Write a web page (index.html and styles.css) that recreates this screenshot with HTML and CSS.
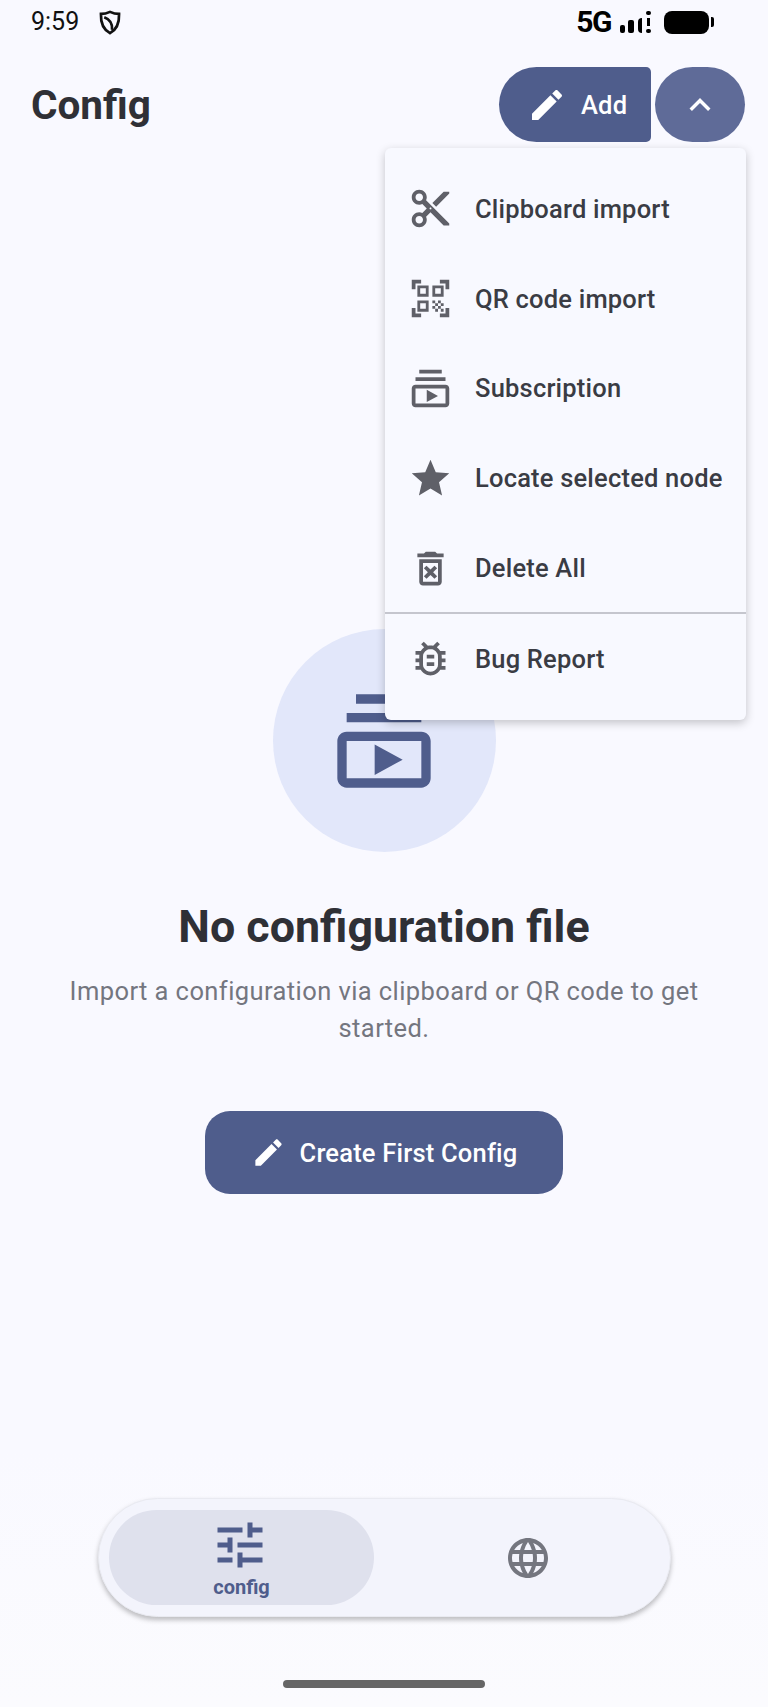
FILE: index.html
```html
<!DOCTYPE html>
<html lang="en">
<head>
    <meta charset="UTF-8">
    <meta name="viewport" content="width=device-width, initial-scale=1.0">
    <title>Config</title>
    <link rel="stylesheet" href="styles.css">
</head>
<body>
<div class="page">

    <!-- Status bar -->
    <div class="status-bar">
        <div class="status-left">
            <span class="clock">9:59</span>
            <svg class="shield" viewBox="0 0 21 24"><path d="M10.5 1.8C7.5 3.2 4.5 3.8 1.8 3.8c-.3 8 1.5 14.5 8.7 18.4 7.2-3.9 9-10.4 8.7-18.4-2.7 0-5.7-.6-8.7-2z"/><path d="M5 7c4 1.500 8 5 7.500 12"/></svg>
        </div>
        <div class="status-right">
            <span class="network">5G</span>
            <div class="signal">
                <span class="bar bar-1"></span>
                <span class="bar bar-2"></span>
                <span class="bar bar-3"></span>
                <div class="alert">
                    <span class="alert-dot"></span>
                    <span class="alert-line"></span>
                    <span class="alert-dot"></span>
                </div>
            </div>
            <div class="battery"></div>
            <div class="battery-tip"></div>
        </div>
    </div>

    <!-- Title and add buttons -->
    <div class="top-bar">
        <h1>Config</h1>
        <div class="top-actions">
            <button class="add-button">
                <svg class="add-icon" viewBox="0 0 24 24"><path d="M3 17.250V21h3.750L17.810 9.940l-3.750-3.750L3 17.250zM20.710 7.040c.39-.39.39-1.020 0-1.410l-2.340-2.340c-.39-.39-1.020-.39-1.410 0l-1.830 1.830 3.750 3.750 1.830-1.830z"/></svg>
                <span>Add</span>
            </button>
            <button class="more-button">
                <svg class="more-icon" viewBox="0 0 24 24"><path d="M12 8l-6 6 1.410 1.410L12 10.830l4.590 4.580L18 14z"/></svg>
            </button>
        </div>
    </div>

    <!-- Empty state -->
    <div class="empty-state">
        <div class="empty-circle">
            <svg class="empty-icon" viewBox="0 0 24 24"><path d="M20 8H4V6h16v2zm-2-6H6v2h12V2zm4 10v8c0 1.100-.9 2-2 2H4c-1.100 0-2-.9-2-2v-8c0-1.100.9-2 2-2h16c1.100 0 2 .9 2 2zm-2 0H4v8h16v-8zm-10 .730v6.530L16 16l-6-3.270z"/></svg>
        </div>
        <h2>No configuration file</h2>
        <p>Import a configuration via clipboard or QR code to get started.</p>
        <button class="create-button">
            <svg class="create-icon" viewBox="0 0 24 24"><path d="M3 17.250V21h3.750L17.810 9.940l-3.750-3.750L3 17.250zM20.710 7.040c.39-.39.39-1.020 0-1.410l-2.340-2.340c-.39-.39-1.020-.39-1.410 0l-1.830 1.830 3.750 3.750 1.830-1.830z"/></svg>
            <span>Create First Config</span>
        </button>
    </div>

    <!-- Bottom navigation -->
    <div class="bottom-nav">
        <div class="nav-item active">
            <svg class="tune-icon" viewBox="0 0 24 24"><path d="M3 17v2h6v-2H3zM3 5v2h10V5H3zm10 16v-2h8v-2h-8v-2h-2v6h2zM7 9v2H3v2h4v2h2V9H7zm14 4v-2H11v2h10zm-6-4h2V7h4V5h-4V3h-2v6z"/></svg>
            <span>config</span>
        </div>
        <div class="nav-item">
            <svg class="globe-icon" viewBox="0 0 24 24"><path d="M11.990 2C6.470 2 2 6.480 2 12s4.470 10 9.990 10C17.520 22 22 17.520 22 12S17.520 2 11.990 2zm6.930 6h-2.950c-.32-1.250-.78-2.450-1.380-3.560 1.840.63 3.370 1.910 4.330 3.560zM12 4.040c.83 1.200 1.480 2.530 1.910 3.960h-3.820c.43-1.430 1.080-2.760 1.910-3.960zM4.260 14C4.100 13.360 4 12.690 4 12s.1-1.360.26-2h3.380c-.08.66-.14 1.320-.14 2 0 .68.06 1.340.14 2H4.260zm.82 2h2.950c.32 1.250.78 2.450 1.380 3.560-1.840-.63-3.370-1.900-4.330-3.560zm2.950-8H5.080c.96-1.660 2.490-2.930 4.330-3.560C8.810 5.550 8.350 6.750 8.030 8zM12 19.960c-.83-1.200-1.480-2.530-1.910-3.960h3.820c-.43 1.430-1.080 2.760-1.910 3.960zM14.340 14H9.660c-.09-.66-.16-1.320-.16-2 0-.68.07-1.350.16-2h4.680c.09.65.16 1.320.16 2 0 .68-.07 1.340-.16 2zm.25 5.560c.6-1.110 1.060-2.310 1.380-3.560h2.950c-.96 1.650-2.490 2.930-4.330 3.560zM16.360 14c.08-.66.14-1.320.14-2 0-.68-.06-1.340-.14-2h3.380c.16.64.26 1.310.26 2s-.1 1.360-.26 2h-3.380z"/></svg>
        </div>
    </div>

    <div class="home-bar"></div>

    <!-- Dropdown menu, lies over the page -->
    <div class="menu">
        <div class="menu-item">
            <svg class="menu-icon" viewBox="0 0 24 24"><path d="M9.640 7.640c.23-.5.36-1.050.36-1.640 0-2.210-1.790-4-4-4S2 3.790 2 6s1.790 4 4 4c.59 0 1.140-.13 1.640-.36L10 12l-2.360 2.360C7.140 14.130 6.590 14 6 14c-2.210 0-4 1.790-4 4s1.790 4 4 4 4-1.790 4-4c0-.59-.13-1.140-.36-1.640L12 14l7 7h3v-1L9.640 7.640zM6 8c-1.100 0-2-.89-2-2s.9-2 2-2 2 .89 2 2-.9 2-2 2zm0 12c-1.100 0-2-.89-2-2s.9-2 2-2 2 .89 2 2-.9 2-2 2zm6-7.500c-.28 0-.5-.22-.5-.5s.22-.5.5-.5.5.22.5.5-.22.5-.5.5zM19 3l-6 6 2 2 7-7V3h-3z"/></svg>
            <span>Clipboard import</span>
        </div>
        <div class="menu-item">
            <svg class="menu-icon" viewBox="0 0 24 24"><path d="M9.500 6.500v3h-3v-3h3M11 5H5v6h6V5zm-1.500 9.500v3h-3v-3h3M11 13H5v6h6v-6zm6.500-6.500v3h-3v-3h3M19 5h-6v6h6V5zm-6 8h1.500v1.500H13V13zm1.500 1.500H16V16h-1.500v-1.500zM16 13h1.500v1.500H16V13zm-3 3h1.500v1.500H13V16zm1.500 1.500H16V19h-1.500v-1.500zM16 16h1.500v1.500H16V16zm1.500-1.500H19V16h-1.500v-1.500zm0 3H19V19h-1.500v-1.500zM22 7h-2V4h-3V2h5v5zm0 15v-5h-2v3h-3v2h5zM2 22h5v-2H4v-3H2v5zM2 2v5h2V4h3V2H2z"/></svg>
            <span>QR code import</span>
        </div>
        <div class="menu-item">
            <svg class="menu-icon" viewBox="0 0 24 24"><path d="M20 8H4V6h16v2zm-2-6H6v2h12V2zm4 10v8c0 1.100-.9 2-2 2H4c-1.100 0-2-.9-2-2v-8c0-1.100.9-2 2-2h16c1.100 0 2 .9 2 2zm-2 0H4v8h16v-8zm-10 .730v6.530L16 16l-6-3.270z"/></svg>
            <span>Subscription</span>
        </div>
        <div class="menu-item">
            <svg class="menu-icon" viewBox="0 0 24 24"><path d="M12 17.270L18.180 21l-1.640-7.030L22 9.240l-7.190-.61L12 2 9.190 8.630 2 9.240l5.460 4.730L5.820 21z"/></svg>
            <span>Locate selected node</span>
        </div>
        <div class="menu-item">
            <svg class="menu-icon" viewBox="0 0 24 24"><path d="M14.120 10.470L12 12.590l-2.130-2.120-1.410 1.410L10.590 14l-2.120 2.120 1.410 1.410L12 15.410l2.120 2.120 1.410-1.410L13.410 14l2.120-2.120zM15.500 4l-1-1h-5l-1 1H5v2h14V4zM6 19c0 1.100.9 2 2 2h8c1.100 0 2-.9 2-2V7H6v12zM8 9h8v10H8V9z"/></svg>
            <span>Delete All</span>
        </div>
        <div class="menu-divider"></div>
        <div class="menu-item">
            <svg class="menu-icon" viewBox="0 0 24 24"><path d="M20 8h-2.810c-.45-.78-1.070-1.450-1.820-1.960L17 4.410 15.590 3l-2.170 2.170C12.960 5.060 12.490 5 12 5s-.96.06-1.410.17L8.410 3 7 4.410l1.620 1.630C7.880 6.550 7.260 7.220 6.810 8H4v2h2.090c-.05.33-.09.66-.09 1v1H4v2h2v1c0 .34.04.67.09 1H4v2h2.810c1.040 1.790 2.970 3 5.190 3s4.150-1.210 5.190-3H20v-2h-2.090c.05-.33.09-.66.09-1v-1h2v-2h-2v-1c0-.34-.04-.67-.09-1H20V8zm-4 4v3c0 .22-.02.47-.06.7l-.1.65-.37.65c-.72 1.240-2.040 2-3.470 2s-2.750-.77-3.470-2l-.37-.64-.1-.65C8.020 15.470 8 15.220 8 15v-4c0-.22.02-.47.06-.69l.1-.65.37-.66c.3-.52.72-.97 1.210-1.310l.57-.39.74-.18c.31-.08.63-.12.95-.12.32 0 .63.04.95.12l.68.16.61.42c.5.34.91.78 1.210 1.310l.38.65.1.65c.04.22.06.47.06.69v1zm-6 2h4v2h-4zm0-4h4v2h-4z"/></svg>
            <span>Bug Report</span>
        </div>
    </div>

</div>
</body>
</html>
```

FILE: styles.css
```css
/* Global Styles */
* {
    box-sizing: border-box;
}

body {
    margin: 0;
    font-family: Roboto, 'Noto Sans', sans-serif;
    background-color: #f9f9ff;
    color: #2f3036;
}

.page {
    position: relative;
    width: 768px;
    height: 1707px;
    overflow: hidden;
    display: flex;
    flex-direction: column;
    background: linear-gradient(#f9f9ff 85%, #fbfbfe);
}

button {
    border: none;
    font-family: inherit;
    color: #fff;
    display: flex;
    align-items: center;
    padding: 0;
}

/* Status bar */
.status-bar {
    height: 44px;
    padding: 0 54px 0 31px;
    display: flex;
    justify-content: space-between;
    align-items: center;
    color: #111;
}

.status-left {
    display: flex;
    align-items: center;
    gap: 20px;
}

.clock {
    font-size: 25px;
    line-height: 44px;
}

.shield {
    width: 22px;
    height: 25px;
    margin-top: 1px;
    fill: none;
    stroke: #111;
    stroke-width: 2.6;
}

.status-right {
    display: flex;
    align-items: center;
}

.network {
    font-size: 30px;
    font-weight: 700;
    line-height: 44px;
    color: #000;
    margin-right: 9px;
    letter-spacing: -1.5px;
}

.signal {
    display: flex;
    align-items: flex-end;
    height: 22px;
    width: 33px;
    margin-right: 11px;
}

.bar {
    display: block;
    background-color: #000;
    border-radius: 2px;
}

.bar-1 {
    width: 5px;
    height: 8px;
    margin-right: 3px;
}

.bar-2 {
    width: 6px;
    height: 13px;
    margin-right: 4px;
}

.bar-3 {
    width: 4px;
    height: 15px;
    margin-right: 4px;
    border-radius: 4px 0 0 4px;
}

.alert {
    display: flex;
    flex-direction: column;
    align-items: center;
    gap: 3px;
}

.alert-dot {
    width: 5px;
    height: 4px;
    border-radius: 2px;
    background-color: #000;
}

.alert-line {
    width: 3px;
    height: 8px;
    background-color: #000;
}

.battery {
    width: 45px;
    height: 23px;
    border-radius: 8px;
    background-color: #000;
}

.battery-tip {
    width: 3px;
    height: 10px;
    margin-left: 2px;
    border-radius: 0 2px 2px 0;
    background-color: #000;
}

/* Top bar */
.top-bar {
    margin-top: 23px;
    height: 75px;
    padding: 0 23px 0 31px;
    display: flex;
    justify-content: space-between;
    align-items: center;
}

h1 {
    margin: 0;
    font-size: 40.500px;
    font-weight: 700;
    color: #2f3036;
}

.top-actions {
    display: flex;
    gap: 4px;
}

.add-button {
    width: 152px;
    height: 75px;
    padding-left: 29px;
    gap: 19px;
    border-radius: 38px 5px 5px 38px;
    background-color: #4f5d8c;
    font-size: 25.500px;
    font-weight: 500;
    letter-spacing: 0.2px;
}

.add-icon {
    width: 40px;
    height: 40px;
    margin-left: -1px;
    margin-right: -5px;
    fill: #fff;
}

.more-button {
    width: 90px;
    height: 75px;
    justify-content: center;
    border-radius: 38px;
    background-color: #5f6b98;
}

.more-icon {
    width: 42px;
    height: 42px;
    fill: #fff;
}

/* Empty state */
.empty-state {
    margin-top: 487px;
    display: flex;
    flex-direction: column;
    align-items: center;
}

.empty-circle {
    width: 223px;
    height: 223px;
    border-radius: 50%;
    background-color: #e2e7fa;
    display: flex;
    justify-content: center;
    align-items: center;
}

.empty-icon {
    width: 112px;
    height: 112px;
    fill: #4f5d8c;
}

h2 {
    margin: 49px 0 0;
    font-size: 44.800px;
    line-height: 52px;
    font-weight: 700;
    color: #2f3036;
}

.empty-state p {
    margin: 20px 0 0;
    width: 660px;
    text-align: center;
    font-size: 25.500px;
    line-height: 37px;
    letter-spacing: 0.42px;
    color: #74767f;
}

.create-button {
    margin-top: 64px;
    width: 358px;
    height: 83px;
    justify-content: center;
    gap: 14px;
    border-radius: 25px;
    background-color: #4f5d8c;
    font-size: 25.500px;
    font-weight: 500;
    letter-spacing: 0.2px;
}

.create-icon {
    width: 35px;
    height: 35px;
    fill: #fff;
}

/* Bottom navigation */
.bottom-nav {
    margin: 304px 0 0 98px;
    width: 573px;
    height: 119px;
    padding: 11px 10px;
    display: flex;
    border: 1px solid #e9eaf1;
    border-radius: 60px;
    background-color: #f3f4fc;
    box-shadow: 0 3px 5px rgba(0, 0, 0, 0.25);
}

.nav-item {
    flex: 1;
    display: flex;
    flex-direction: column;
    align-items: center;
    justify-content: center;
    border-radius: 48px;
    margin-left: 21px;
}

.nav-item.active {
    flex: 0 0 265px;
    margin-left: 0;
    justify-content: flex-start;
    background-color: #dfe1ed;
    color: #4f5d8c;
    font-size: 20px;
    font-weight: 700;
    line-height: 24px;
}

.tune-icon {
    width: 60px;
    height: 60px;
    margin-top: 5px;
    margin-left: -3px;
    fill: #4f5d8c;
}

.globe-icon {
    width: 48px;
    height: 48px;
    fill: #74767f;
}

.home-bar {
    margin: 63px 0 0 283px;
    width: 202px;
    height: 8px;
    border-radius: 4px;
    background-color: #666;
}

/* Menu */
.menu {
    position: absolute;
    top: 148px;
    left: 385px;
    width: 361px;
    height: 572px;
    padding: 16px 0;
    border-radius: 6px;
    background-color: #f8f9ff;
    box-shadow: 0 3px 10px rgba(0, 0, 0, 0.22);
}

.menu-item {
    height: 89.800px;
    padding-left: 23px;
    display: flex;
    align-items: center;
    gap: 22px;
    font-size: 25.500px;
    font-weight: 500;
    letter-spacing: 0.2px;
    color: #3a3c44;
}

.menu-icon {
    width: 45px;
    height: 45px;
    flex: none;
    fill: #5f6068;
}

.menu-divider {
    height: 2px;
    margin-top: -1px;
    margin-bottom: 0;
    background-color: #c5c6ce;
}
```
